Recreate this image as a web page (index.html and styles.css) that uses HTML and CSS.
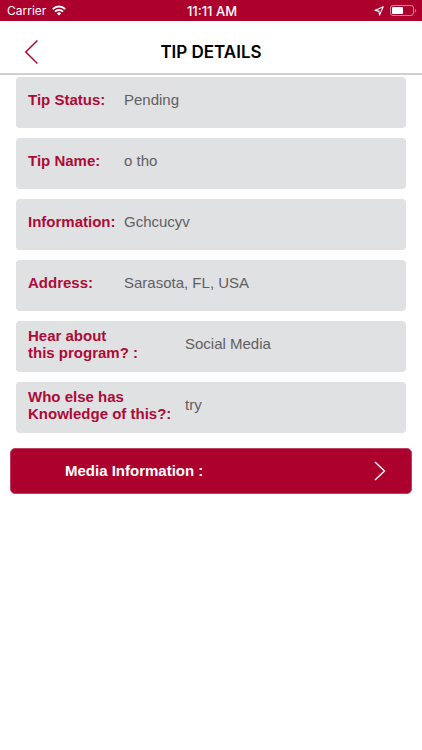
FILE: index.html
```html
<!DOCTYPE html>
<html lang="en">
<head>
    <meta charset="UTF-8">
    <meta name="viewport" content="width=device-width, initial-scale=1.0">
    <title>Tip Details</title>
    <link rel="stylesheet" href="styles.css">
</head>
<body>
    <div class="status-bar">
        <div class="carrier">
            <span>Carrier</span>
            <svg width="14" height="11" viewBox="0 0 14 11" fill="none" stroke="#fff" stroke-width="2">
                <path d="M0.8 4.1a8.9 8.9 0 0 1 12.4 0"/>
                <path d="M3 6.6a5.7 5.7 0 0 1 8 0"/>
                <path d="M7 10.6L4.8 8.4a3.1 3.1 0 0 1 4.4 0z" fill="#fff" stroke="none"/>
            </svg>
        </div>
        <span class="time">11:11 AM</span>
        <div class="battery">
            <svg width="10" height="10" viewBox="0 0 10 10" fill="none" stroke="#fff" stroke-width="1.1" stroke-linejoin="round">
                <path d="M9.2 0.8L0.9 4.4L4.9 5.1L5.6 9.1z"/>
            </svg>
            <svg width="27" height="12" viewBox="0 0 27 12">
                <rect x="0.5" y="0.5" width="23" height="10" rx="2.5" fill="none" stroke="#fff" stroke-opacity="0.5"/>
                <rect x="2" y="2" width="11" height="7" rx="1" fill="#fff"/>
                <path d="M25 4v3.6c1.7-.6 1.7-3 0-3.6z" fill="#fff" fill-opacity="0.5"/>
            </svg>
        </div>
    </div>

    <header class="header">
        <button class="back" aria-label="Back">
            <svg width="14" height="26" viewBox="0 0 14 26" fill="none" stroke="#a5123a" stroke-width="1.6">
                <path d="M13.4 1.5L1.8 13L13.4 24.5"/>
            </svg>
        </button>
        <h1>TIP DETAILS</h1>
    </header>

    <main>
        <dl class="details">
            <div class="row">
                <dt>Tip Status:</dt>
                <dd>Pending</dd>
            </div>
            <div class="row">
                <dt>Tip Name:</dt>
                <dd>o tho</dd>
            </div>
            <div class="row">
                <dt>Information:</dt>
                <dd>Gchcucyv</dd>
            </div>
            <div class="row">
                <dt>Address:</dt>
                <dd>Sarasota, FL, USA</dd>
            </div>
            <div class="row wide">
                <dt>Hear about<br>this program? :</dt>
                <dd>Social Media</dd>
            </div>
            <div class="row wide">
                <dt>Who else has<br>Knowledge of this?:</dt>
                <dd>try</dd>
            </div>
        </dl>

        <button class="media">
            <span>Media Information :</span>
            <svg width="12" height="20" viewBox="0 0 12 20" fill="none" stroke="#fff" stroke-width="1.4">
                <path d="M1 1L10.5 10L1 19"/>
            </svg>
        </button>
    </main>
</body>
</html>
```

FILE: styles.css
```css
* {
    box-sizing: border-box;
}
body {
    margin: 0;
    background-color: #fff;
    font-family: "Liberation Sans", Arial, sans-serif;
    font-size: 15px;
}
.status-bar {
    display: grid;
    grid-template-columns: 1fr auto 1fr;
    align-items: center;
    height: 21px;
    padding: 0 5px 0 7px;
    background-color: #ac002d;
    color: #fff;
    font-family: Inter, sans-serif;
    font-size: 12px;
}
.carrier, .battery {
    display: flex;
    align-items: center;
    gap: 6px;
}
.battery {
    justify-content: flex-end;
}
.time {
    font-size: 13px;
    font-weight: 500;
}
.header {
    display: grid;
    grid-template-columns: 1fr auto 1fr;
    align-items: center;
    height: 54px;
    padding: 0 24px;
    border-bottom: 2px solid #d0d0d1;
}
.header h1 {
    padding-top: 10px;
    margin: 0;
    color: #000;
    font-family: Inter, sans-serif;
    font-size: 17px;
    font-weight: 600;
}
.back {
    display: flex;
    justify-self: start;
    padding: 9px 0 0;
    border: none;
    background: none;
    cursor: pointer;
}
.details {
    display: flex;
    flex-direction: column;
    gap: 10px;
    margin: 0;
    padding: 2px 16px 0;
}
.row {
    display: grid;
    grid-template-columns: 96px 1fr;
    align-items: center;
    min-height: 51px;
    padding: 0 12px 6px;
    border-radius: 4px;
    background-color: #e0e1e3;
    line-height: 17px;
}
.row.wide {
    grid-template-columns: 157px 1fr;
}
.row dt {
    color: #ac0b36;
    font-weight: bold;
    white-space: nowrap;
}
.row dd {
    margin: 0;
    color: #606062;
}
.media {
    display: flex;
    align-items: center;
    justify-content: space-between;
    width: calc(100% - 20px);
    height: 46px;
    margin: 15px 10px;
    padding: 0 25px 1px 54px;
    border: 1px solid #c04065;
    border-radius: 5px;
    background-color: #ac002d;
    color: #fff;
    font-family: inherit;
    font-size: 15px;
    font-weight: bold;
    cursor: pointer;
}
```
